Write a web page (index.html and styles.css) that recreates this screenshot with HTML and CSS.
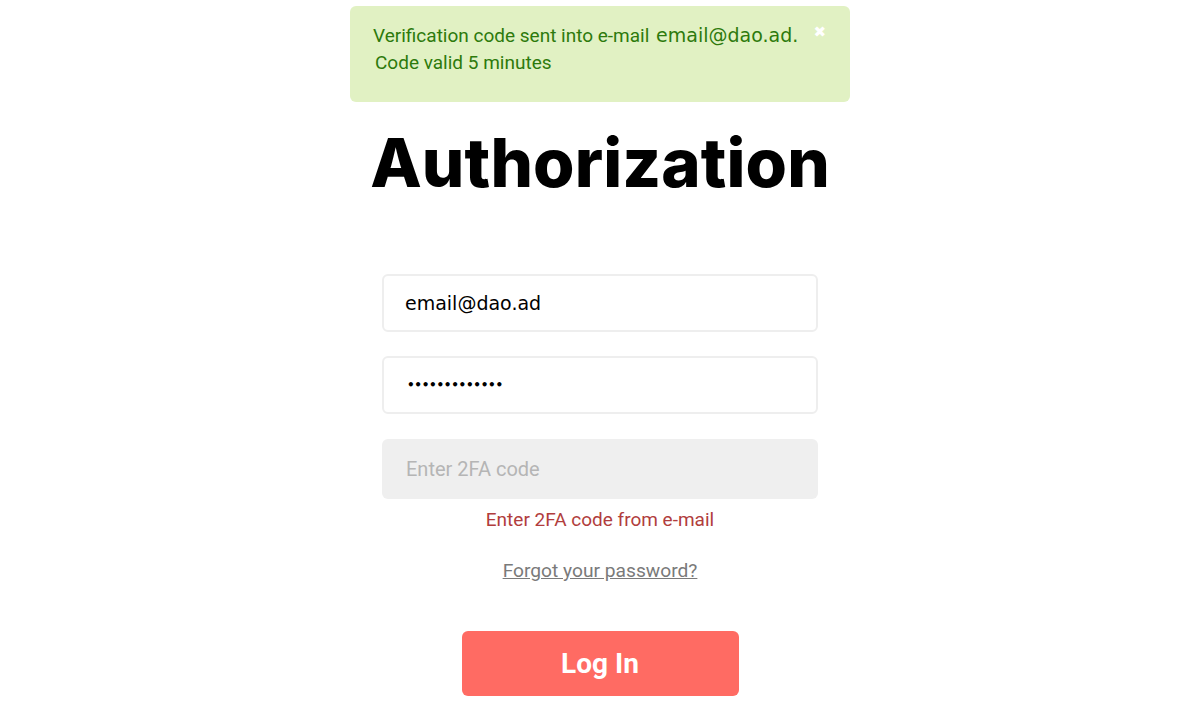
FILE: index.html
```html
<!DOCTYPE html>
<html lang="en">
<head>
<meta charset="utf-8">
<title>Authorization</title>
<link rel="stylesheet" href="styles.css">
</head>
<body>
<div class="page">
  <div class="toast">
    <div class="toast-text">
      <span class="t1">Verification code sent into e-mail <span class="mail">email@dao.ad.</span></span>
      <span class="t2">Code valid 5 minutes</span>
    </div>
    <span class="close">&#x2716;</span>
  </div>
  <h1 class="title">Authorization</h1>
  <form class="form">
    <div class="field"><span class="value">email@dao.ad</span></div>
    <div class="field pass"><span class="value">&#x2022;&#x2022;&#x2022;&#x2022;&#x2022;&#x2022;&#x2022;&#x2022;&#x2022;&#x2022;&#x2022;&#x2022;&#x2022;</span></div>
    <div class="field code"><span class="placeholder">Enter 2FA code</span></div>
    <div class="error">Enter 2FA code from e-mail</div>
    <a class="forgot" href="#">Forgot your password?</a>
    <button class="btn" type="button">Log In</button>
  </form>
</div>
</body>
</html>
```
FILE: styles.css
```css
* { box-sizing: border-box; }
html, body { margin: 0; padding: 0; background: #fff; }
.page {
  display: flex;
  flex-direction: column;
  align-items: center;
  padding-top: 6px;
  font-family: Roboto, "Liberation Sans", sans-serif;
}
.toast {
  width: 500px;
  height: 96px;
  background: #e1f1c3;
  border-radius: 6px;
  display: flex;
  justify-content: space-between;
  padding: 16px 22px 0 23px;
  color: #2d7a0c;
}
.toast-text { display: flex; flex-direction: column; font-size: 19px; line-height: 27px; }
.t2 { padding-left: 2px; }
.mail { font-family: "DejaVu Sans", sans-serif; font-size: 19px; padding-left: 2px; }
.close { color: #fff; font-size: 15px; line-height: 20px; padding-top: 0; font-family: "DejaVu Sans", sans-serif; margin-right: 2px; }
.title {
  margin: 21px 0 0 0;
  font-family: Inter, sans-serif;
  font-weight: 800;
  font-size: 67px;
  line-height: 80px;
  letter-spacing: 0.1px;
  color: #000;
}
.form {
  margin-top: 71px;
  width: 436px;
  display: flex;
  flex-direction: column;
  align-items: center;
}
.field {
  width: 100%;
  height: 58px;
  border: 2px solid #eeeeee;
  border-radius: 6px;
  display: flex;
  align-items: center;
  padding-left: 21px;
  margin-bottom: 24px;
}
.value { font-family: "DejaVu Sans", sans-serif; font-size: 19px; color: #000; }
.pass .value { font-size: 12px; padding-left: 2px; font-weight: 700; letter-spacing: -0.3px; }
.field.code {
  height: 60px;
  margin-top: 1px;
  background: #efefef;
  border: none;
  padding-left: 24px;
  margin-bottom: 0;
}
.placeholder { font-size: 20px; color: #b5b5b5; }
.error { margin-top: 9px; font-size: 19px; line-height: 24px; color: #b13d3d; }
.forgot { margin-top: 27px; font-size: 19.2px; line-height: 24px; color: #7a7a7a; text-decoration: underline; }
.btn {
  margin-top: 48px;
  width: 277px;
  height: 65px;
  border: none;
  border-radius: 6px;
  background: #ff6b63;
  color: #fff;
  font-family: Roboto, sans-serif;
  font-weight: 700;
  font-size: 28px;
}
```
